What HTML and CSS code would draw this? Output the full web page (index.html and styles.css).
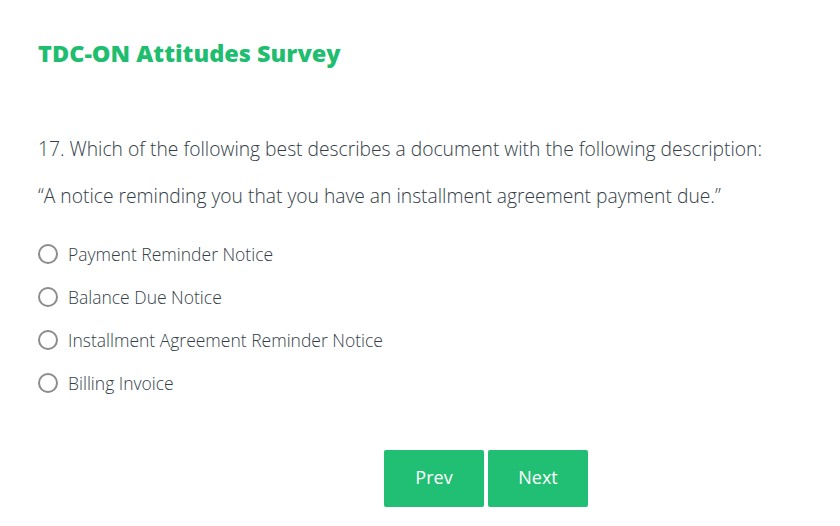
FILE: index.html
```html
<!DOCTYPE html>
<html>
<head>
<meta charset="utf-8">
<link rel="stylesheet" href="styles.css">
</head>
<body>
<main class="survey">
  <h1 class="title">TDC-ON Attitudes Survey</h1>
  <section class="question">
    <p class="q-text">17. Which of the following best describes a document with the following description:</p>
    <p class="q-text q-quote">“A notice reminding you that you have an installment agreement payment due.”</p>
    <div class="options">
      <label class="option"><span class="radio"></span><span class="opt-label">Payment Reminder Notice</span></label>
      <label class="option"><span class="radio"></span><span class="opt-label">Balance Due Notice</span></label>
      <label class="option"><span class="radio"></span><span class="opt-label">Installment Agreement Reminder Notice</span></label>
      <label class="option"><span class="radio"></span><span class="opt-label">Billing Invoice</span></label>
    </div>
  </section>
  <div class="nav">
    <button class="btn">Prev</button>
    <button class="btn">Next</button>
  </div>
</main>
</body>
</html>
```
FILE: styles.css
```css
* { box-sizing: border-box; }
html, body { margin: 0; padding: 0; background: #fff; }
body {
  font-family: "Open Sans", "Liberation Sans", sans-serif;
  color: #333e48;
}
.survey {
  padding: 38px 0 0 38px;
  width: 840px;
}
.title {
  margin: 0;
  font-family: "Open Sans", "Liberation Sans", sans-serif;
  font-weight: 800;
  font-size: 23.5px;
  line-height: 30px;
  color: #1fbd70;
}
.question { margin-top: 67px; }
.q-text {
  margin: 0;
  font-size: 19.25px;
  font-weight: 300;
  line-height: 28px;
}
.q-quote { margin-top: 19px; }
.options {
  margin-top: 32px;
  display: flex;
  flex-direction: column;
  gap: 19px;
}
.option {
  display: flex;
  align-items: center;
  gap: 10px;
  height: 24px;
}
.radio {
  width: 20px;
  height: 20px;
  border: 2px solid #8c8c8c;
  border-radius: 50%;
  flex: none;
}
.opt-label {
  font-size: 17.5px;
  font-weight: 300;
  color: #333e48;
}
.nav {
  margin-top: 55px;
  display: flex;
  gap: 4px;
  padding-left: 346px;
}
.btn {
  width: 100px;
  height: 57px;
  padding: 0 0 3px;
  border: none;
  border-radius: 2px;
  background: #21bf73;
  color: #fff;
  font-family: "Open Sans", "Liberation Sans", sans-serif;
  font-size: 18px;
  font-weight: 400;
}
```
